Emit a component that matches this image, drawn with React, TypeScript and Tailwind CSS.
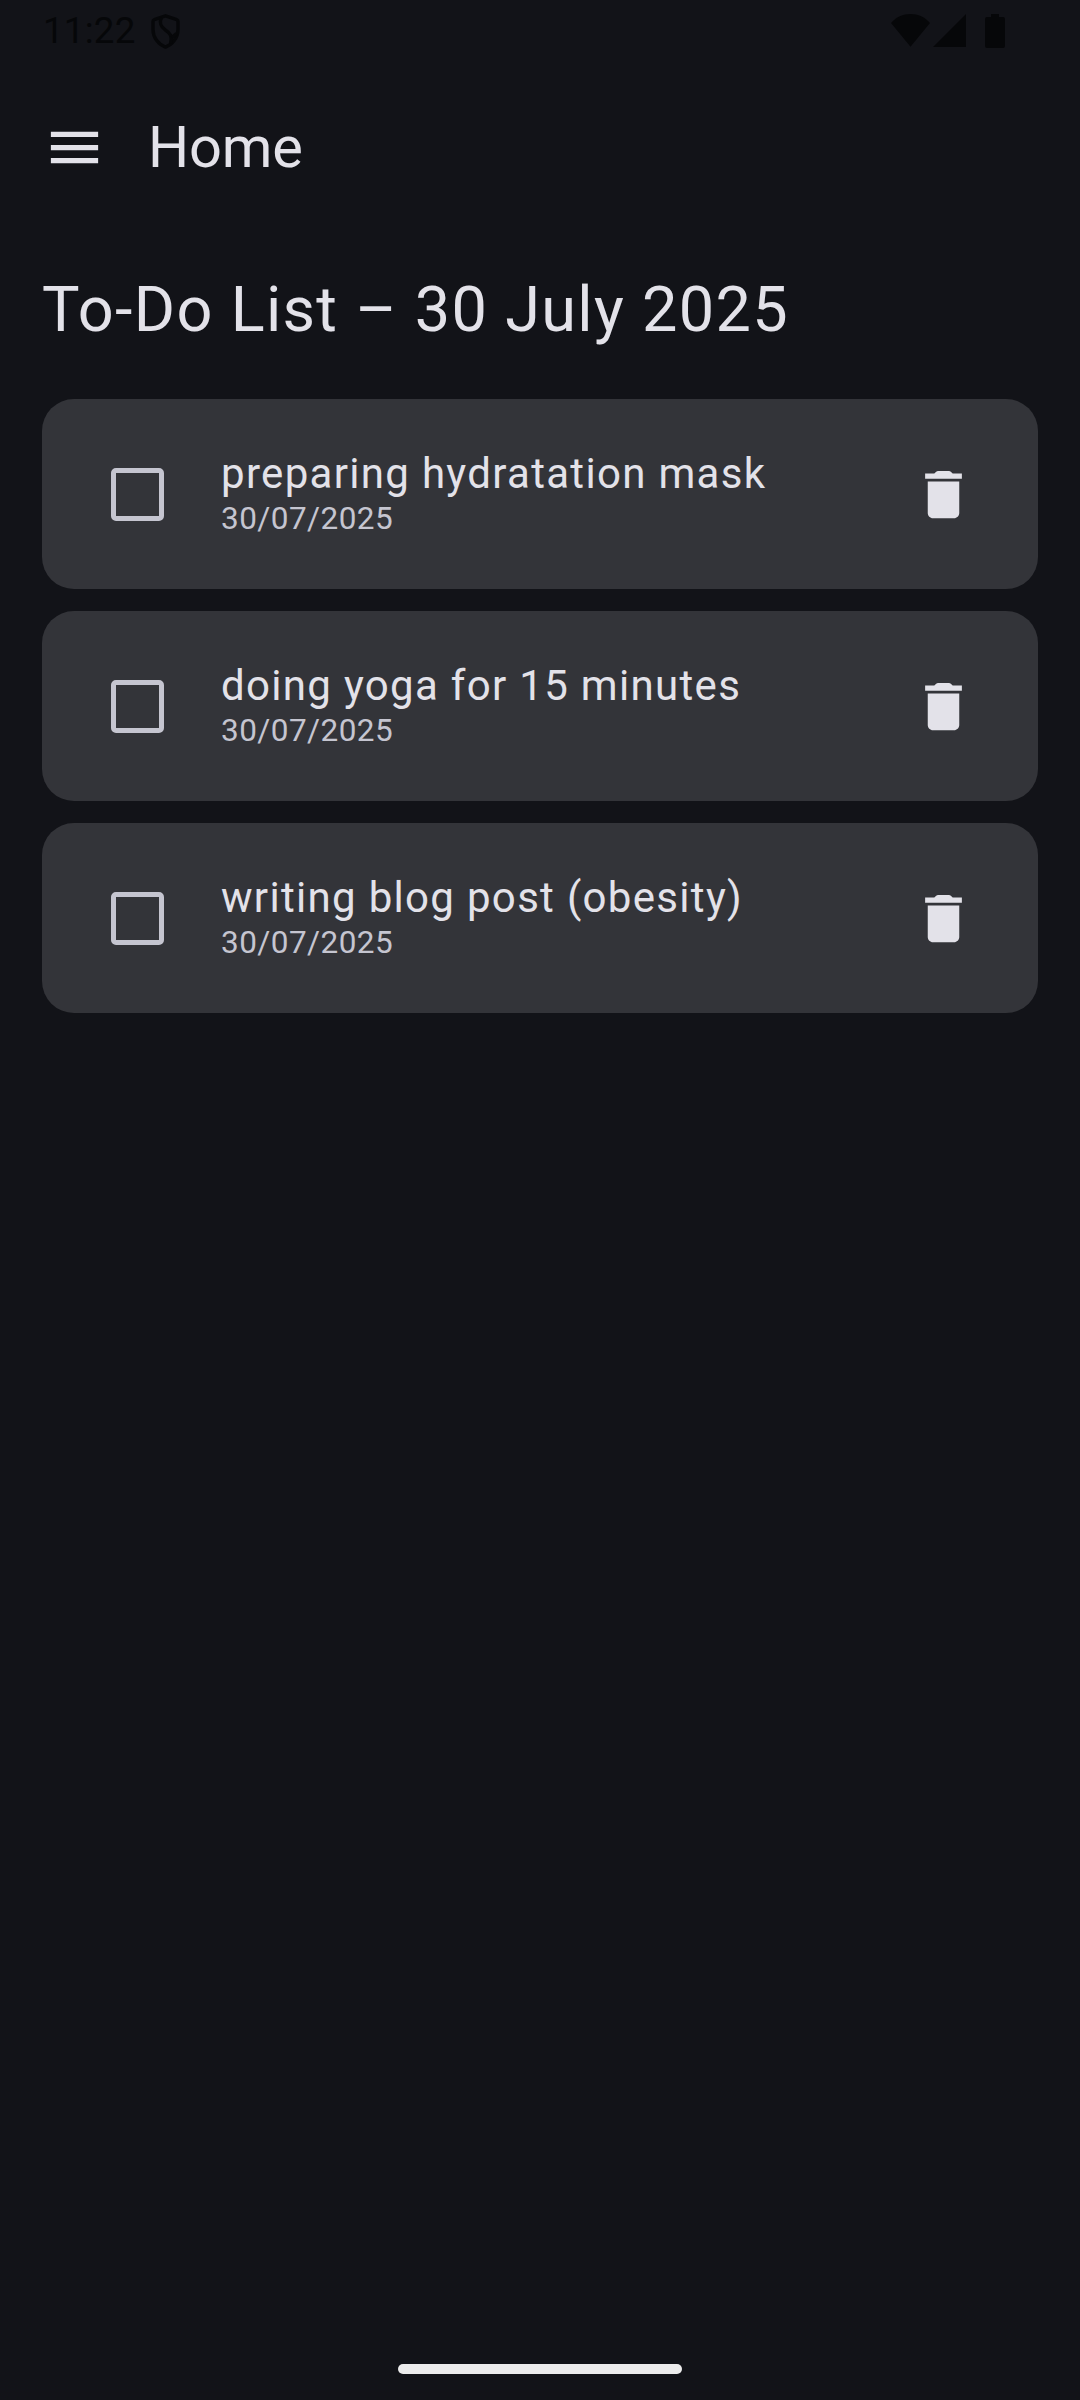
const tasks = [
  { title: "preparing hydratation mask", date: "30/07/2025" },
  { title: "doing yoga for 15 minutes", date: "30/07/2025" },
  { title: "writing blog post (obesity)", date: "30/07/2025" },
];

function StatusBar() {
  return (
    <div className="flex h-[63px] items-start justify-between pl-[43px] pr-[75px] text-[#060709]">
      <div className="flex items-start">
        <span className="mt-[9px] w-[108px] text-[36.75px] leading-[44px] tracking-[0.2px]">11:22</span>
        <svg className="mt-[14px] h-[35px] w-[29px]" viewBox="0 0 29 35" fill="none" stroke="currentColor" strokeWidth="3.4" strokeLinejoin="round">
          <path d="M14.5 1.800 3.200 5.700Q2 6.200 2 7.500V15.500C2 23.500 7.300 30.500 14.500 33.100 21.700 30.500 27 23.500 27 15.500V7.500Q27 6.200 25.800 5.700Z" />
          <path d="M10.500 3.800C8.200 8 9.500 12.500 14 15.700 19.500 19.200 21.500 22.500 19.500 29.500" />
          <path d="M21 23.500 25.500 19.500" />
        </svg>
      </div>
      <svg className="mt-[14px] h-[34px] w-[114px]" viewBox="0 0 114 34" fill="currentColor">
        <path d="M0 9C5 3 12 0 19.500 0S34 3 39 9L19.500 32.700Z" />
        <path d="M42 33H75V0Z" />
        <path d="M100 0h8v3h4a2 2 0 0 1 2 2v27a2 2 0 0 1-2 2H96a2 2 0 0 1-2-2V5a2 2 0 0 1 2-2h4Z" />
      </svg>
    </div>
  );
}

function MenuIcon() {
  return (
    <svg className="h-[63px] w-[63px]" viewBox="0 0 24 24" fill="currentColor">
      <path d="M3 18h18v-2H3v2zm0-5h18v-2H3v2zm0-7v2h18V6H3z" />
    </svg>
  );
}

function DeleteIcon() {
  return (
    <svg className="h-[63px] w-[63px]" viewBox="0 0 24 24" fill="currentColor">
      <path d="M6 19c0 1.100.9 2 2 2h8c1.100 0 2-.9 2-2V7H6v12zM15.500 4l-.71-.71c-.18-.18-.44-.29-.7-.29H9.910c-.26 0-.52.11-.7.29L8.500 4H5v2h14V4h-3.500z" />
    </svg>
  );
}

function TaskCard({ title, date }: { title: string; date: string }) {
  return (
    <li className="flex h-[190px] items-center rounded-[32px] bg-[#333439] pl-[69px] pr-[63px]">
      <button aria-label={`Complete ${title}`} className="h-[53px] w-[53px] rounded-[5px] border-[5px] border-[#c5c5d0]" />
      <div className="ml-[57px] flex-1">
        <p className="text-[42px] leading-[50px] tracking-[1.3125px]">{title}</p>
        <p className="text-[31.5px] leading-[40px] tracking-[0.45px] text-[#c5c5d0]">{date}</p>
      </div>
      <button aria-label={`Delete ${title}`}>
        <DeleteIcon />
      </button>
    </li>
  );
}

export default function App() {
  return (
    <div className="flex h-[2400px] w-[1080px] flex-col bg-[#121318] font-[Roboto,sans-serif] text-[#e3e2e9]">
      <StatusBar />
      <header className="flex h-[168px] items-center pl-[43px]">
        <button aria-label="Menu">
          <MenuIcon />
        </button>
        <h1 className="ml-[42px] text-[57.75px] leading-[74px] tracking-[-0.2px]">Home</h1>
      </header>
      <main className="flex-1 px-[42px] pt-[37px]">
        <h2 className="text-[63px] leading-[84px] tracking-[1.3125px]">To-Do List – 30 July 2025</h2>
        <ul className="mt-[47px] flex flex-col gap-[22px]">
          {tasks.map((task) => (
            <TaskCard key={task.title} title={task.title} date={task.date} />
          ))}
        </ul>
      </main>
      <div className="mb-[26px] h-[10px] w-[284px] self-center rounded-full bg-[#ececec]" />
    </div>
  );
}
